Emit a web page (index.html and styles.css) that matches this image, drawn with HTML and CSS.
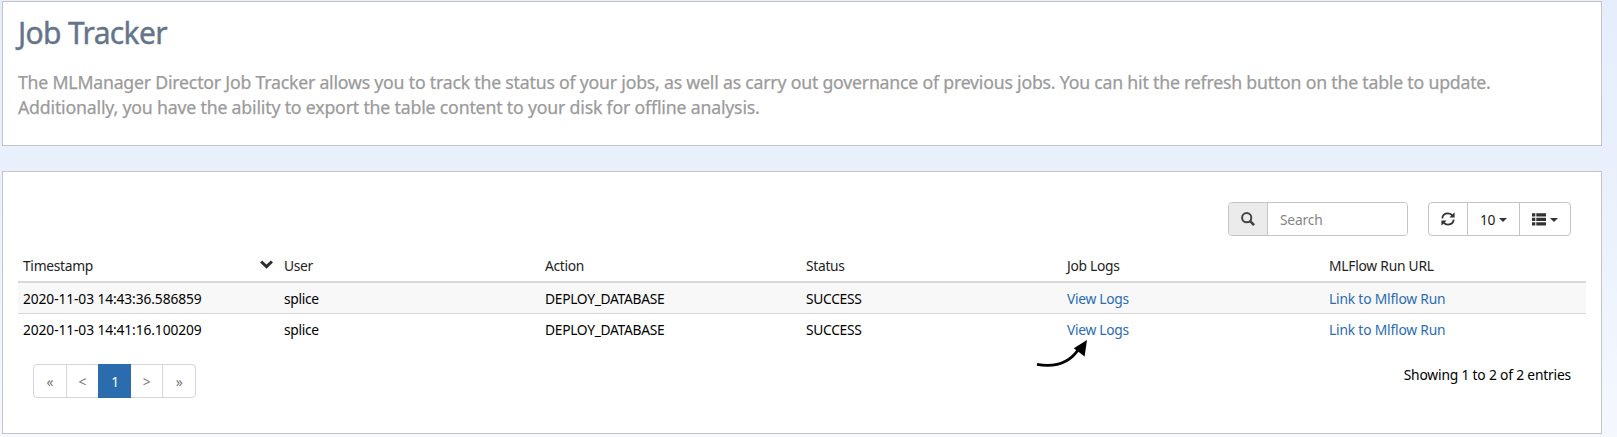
FILE: index.html
```html
<!DOCTYPE html>
<html lang="en">
<head>
<meta charset="utf-8">
<title>Job Tracker</title>
<link rel="stylesheet" href="styles.css">
</head>
<body>
<main class="page">
  <section class="panel intro">
    <h1 class="title">Job Tracker</h1>
    <p class="lead"><span class="line">The MLManager Director Job Tracker allows you to track the status of your jobs, as well as carry out governance of previous jobs. You can hit the refresh button on the table to update.</span><span class="line second">Additionally, you have the ability to export the table content to your disk for offline analysis.</span></p>
  </section>
  <section class="panel jobs">
    <div class="toolbar">
      <div class="search">
        <span class="search-icon"><svg width="14" height="14" viewBox="0 0 14 14"><circle cx="5.7" cy="5.7" r="4.6" fill="none" stroke="#444" stroke-width="2"/><path d="M9 9l4.1 4.1" stroke="#444" stroke-width="2.6"/></svg></span>
        <input class="search-input" type="text" placeholder="Search">
      </div>
      <div class="buttons">
        <button class="btn refresh"><svg width="14" height="14" viewBox="0 0 14 14" fill="none" stroke="#333" stroke-width="1.8"><path d="M1.3 6.3C1.6 3.2 4 1.4 7 1.4c1.9 0 3.4.8 4.5 2.2M12.7 7.7c-.3 3.1-2.7 4.9-5.7 4.9-1.9 0-3.4-.8-4.5-2.2"/><path d="M13.6.3v5.2H8.4zM.4 13.7V8.5h5.2z" fill="#333" stroke="none"/></svg></button>
        <button class="btn size">10<i class="caret"></i></button>
        <button class="btn columns"><svg width="14" height="13" viewBox="0 0 14 13" fill="#333"><path d="M0 .3h3.3v3.3H0zM4.3.3H14v3.3H4.3zM0 4.8h3.3v3.3H0zM4.3 4.8H14v3.3H4.3zM0 9.3h3.3v3.3H0zM4.3 9.3H14v3.3H4.3z"/></svg><i class="caret"></i></button>
      </div>
    </div>
    <table class="table">
      <colgroup><col class="col"><col class="col"><col class="col"><col class="col"><col class="col wide"><col></colgroup>
      <thead>
        <tr><th><span class="sortable">Timestamp<svg class="sort" width="13" height="9" viewBox="0 0 13 9"><path d="M1.1 1.5l5.4 5.1 5.4-5.1" fill="none" stroke="#2d2d2d" stroke-width="3"/></svg></span></th><th>User</th><th>Action</th><th>Status</th><th>Job Logs</th><th class="url">MLFlow Run URL</th></tr>
      </thead>
      <tbody>
        <tr class="odd"><td class="stamp">2020-11-03 14:43:36.586859</td><td>splice</td><td>DEPLOY_DATABASE</td><td>SUCCESS</td><td><a class="link">View Logs</a></td><td><a class="link run">Link to Mlflow Run</a></td></tr>
        <tr><td class="stamp">2020-11-03 14:41:16.100209</td><td>splice</td><td>DEPLOY_DATABASE</td><td>SUCCESS</td><td class="pointed"><a class="link">View Logs</a><svg class="arrow" width="54" height="32" viewBox="0 0 54 32"><path d="M1 25.4C20 28.6 34.5 23 43 9.5" fill="none" stroke="#000" stroke-width="2.8"/><path d="M51 1L48.6 17.5 37.8 9.3z"/></svg></td><td><a class="link run">Link to Mlflow Run</a></td></tr>
      </tbody>
    </table>
    <div class="footer">
      <nav class="pages"><a class="pg">«</a><a class="pg">&lt;</a><a class="pg active">1</a><a class="pg">&gt;</a><a class="pg">»</a></nav>
      <div class="info">Showing 1 to 2 of 2 entries</div>
    </div>
  </section>
</main>
</body>
</html>
```
FILE: styles.css
```css
* { box-sizing: border-box; }
html { height: 100%; }
body {
  margin: 0;
  height: 437px;
  overflow: hidden;
  background: linear-gradient(#e6eefc, #eaf1fd 45%, #f5f8fe);
  font-family: "Noto Sans", "Open Sans", sans-serif;
  font-size: 13.8px;
  letter-spacing: -0.3px;
  color: #000;
}
.page { padding: 1px 15px 0 2px; display: flex; flex-direction: column; gap: 25px; }
.panel { background: #fff; border: 1px solid #c3c5cb; }
.intro { height: 145px; padding: 10px 15px 0; }
.title { margin: 0; font-size: 30px; font-weight: 400; line-height: 42px; letter-spacing: -0.65px; color: #64748a; -webkit-text-stroke: 0.4px #64748a; }
.lead { margin: 16px 0 0; font-size: 17.7px; line-height: 25.2px; letter-spacing: -0.21px; color: #9b9b9b; -webkit-text-stroke: 0.25px #9b9b9b; }
.line { display: block; white-space: nowrap; }
.second { letter-spacing: -0.18px; }
.jobs { height: 263px; padding: 30px 15px 0; }
.toolbar { display: flex; justify-content: flex-end; gap: 20px; padding-right: 15px; height: 35px; }
.search { display: flex; width: 180px; height: 34px; border: 1px solid #c4c4c4; border-radius: 4px; overflow: hidden; }
.search-icon { width: 39px; display: flex; align-items: center; justify-content: center; background: #ebebeb; border-right: 1px solid #c4c4c4; }
.search-input { flex: 1; min-width: 0; border: 0; padding: 0 12px; font: inherit; letter-spacing: -0.2px; background: #fff; }
.search-input::placeholder { color: #858585; opacity: 1; }
.buttons { display: flex; width: 143px; height: 34px; border: 1px solid #c4c4c4; border-radius: 4px; }
.btn { display: flex; align-items: center; justify-content: center; gap: 4px; padding: 0; border: 0; border-right: 1px solid #c4c4c4; background: transparent; font: inherit; letter-spacing: inherit; color: #222; }
.refresh { width: 39px; }
.size { width: 52px; }
.columns { flex: 1; border-right: 0; }
.caret { width: 0; height: 0; border: 4px solid transparent; border-top-color: #333; border-bottom: 0; margin-top: 2px; }
.table { width: 1568px; border-collapse: separate; border-spacing: 0; table-layout: fixed; margin-top: 12px; }
.col { width: 261px; }
.wide { width: 262px; }
.table th { height: 34px; padding: 1px 5px 0; text-align: left; font-weight: 400; color: #222; border-bottom: 2px solid #d9d9d9; }
.table .url { letter-spacing: -0.24px; }
.table td { height: 30px; padding: 0 5px; }
.table .stamp { letter-spacing: -0.11px; }
.odd td { background: #f8f8f8; height: 31px; border-bottom: 1px solid #d9d9d9; }
.sortable { display: flex; align-items: center; justify-content: space-between; padding-right: 1px; }
.sort { margin-top: -3px; }
.link { color: #2b6cb0; }
.run { letter-spacing: -0.18px; }
.pointed { position: relative; }
.arrow { position: absolute; left: -26px; top: 25px; }
.footer { display: flex; justify-content: space-between; padding: 20px 15px 0; }
.pages { display: flex; width: 163px; height: 34px; border: 1px solid #d6d6d6; border-radius: 4px; }
.pg { flex: 1; display: flex; align-items: center; justify-content: center; border-left: 1px solid #d6d6d6; color: #777; }
.pg:first-child { border-left: 0; }
.active { margin: -1px 0; background: #2a6cad; border-color: #2a6cad; color: #fff; }
.active + .pg { border-left: 0; }
.info { line-height: 21px; letter-spacing: -0.18px; }
```
